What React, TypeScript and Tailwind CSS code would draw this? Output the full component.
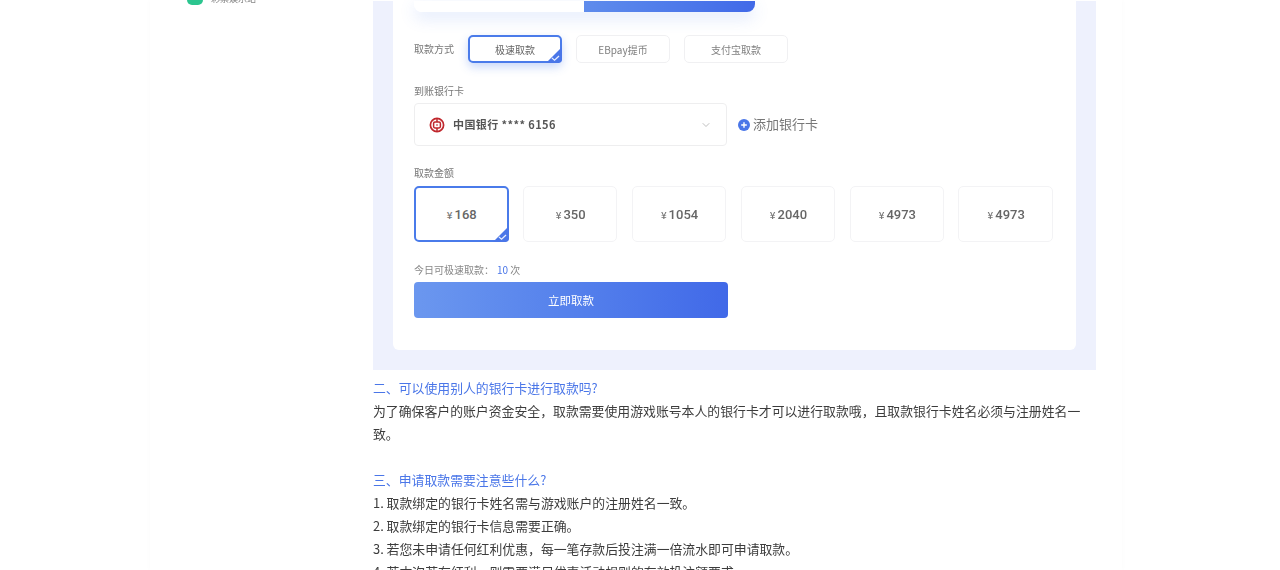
import { ChevronDown } from "lucide-react";

const font = { fontFamily: '"Noto Sans CJK SC", "Noto Sans", sans-serif' };

function Corner({ size = 16 }: { size?: number }) {
  return (
    <svg className="absolute -right-[2px] -bottom-[2px]" width={size} height={size} viewBox="0 0 15 15">
      <path d="M15 0V11.5A3.5 3.5 0 0 1 11.5 15H0Z" fill="#4a76e8" />
      <path d="M5.5 10.2L8 12.4L12.2 8.4" fill="none" stroke="#e8efff" strokeWidth="1.2" />
    </svg>
  );
}

function BankIcon() {
  return (
    <svg width="16" height="16" viewBox="0 0 16 16" className="shrink-0">
      <circle cx="8" cy="8" r="6.6" fill="none" stroke="#c0272d" strokeWidth="1.7" />
      <rect x="4.6" y="5" width="6.8" height="6" rx="1.4" fill="none" stroke="#c0272d" strokeWidth="1.5" />
      <path d="M8 1.5V5M8 11V14.5" stroke="#c0272d" strokeWidth="1.5" />
      <path d="M8 7V9" stroke="#c0272d" strokeWidth="1" />
    </svg>
  );
}

function MethodButton({ label, width, active }: { label: string; width: string; active?: boolean }) {
  return (
    <div
      className={
        active
          ? "relative flex h-[28px] w-[94px] items-center justify-center rounded-[5px] border-2 border-[#4a7bea] bg-white text-[10px] text-[#666] shadow-[0_4px_10px_rgba(74,123,234,0.3)]"
          : `flex h-[28px] ${width} items-center justify-center rounded-[5px] border border-[#f0f0f2] bg-white text-[10px] text-[#808080]`
      }
    >
      {label}
      {active && <Corner />}
    </div>
  );
}

function AmountCard({ value, active }: { value: string; active?: boolean }) {
  return (
    <div
      className={
        active
          ? "relative flex h-[56px] items-center justify-center rounded-[5px] border-2 border-[#4a7bea] bg-white pt-[1px] pl-[1px]"
          : "flex h-[56px] items-center justify-center rounded-[5px] border border-[#f3f3f5] bg-white pt-[1px] pl-[1px]"
      }
    >
      <span className="text-[10px] font-medium text-[#777]">¥</span>
      <span className="ml-[2px] text-[13px] font-medium text-[#666]" style={{ fontFamily: "Roboto, sans-serif" }}>
        {value}
      </span>
      {active && <Corner />}
    </div>
  );
}

export default function App() {
  return (
    <div className="h-[570px] overflow-hidden bg-white text-[12.87px] leading-[23px] text-[#3c3c3c]" style={font}>
      <div className="ml-[150px] flex h-[570px] w-[972px] shadow-[0_0_6px_rgba(0,0,0,0.025)]">
        <aside className="flex w-[223px] shrink-0 items-start gap-[8px] overflow-hidden pl-[37px]">
          <div className="h-[5px] w-[16px] shrink-0 rounded-b-full bg-[#2cc58f]" />
          <div className="-mt-[6px] text-[9px] leading-[10px] text-[#888] blur-[0.4px]">彩票娱乐站</div>
        </aside>

        <main className="w-[723px] shrink-0">
          <section className="mt-px bg-[#eef1fd] px-[20px] pb-[20px]">
            <div className="rounded-b-[6px] bg-white pb-[32px] pl-[21px]">
              <div className="blur-[0.35px]">
                <div className="flex h-[11px] w-[341px] overflow-hidden rounded-b-[8px] shadow-[0_6px_16px_rgba(74,123,234,0.18)]">
                  <div className="w-[170px] bg-white" />
                  <div className="flex-1 bg-gradient-to-r from-[#5f8cec] to-[#4169e8]" />
                </div>

                <div className="mt-[23px] flex items-center">
                  <span className="w-[54px] text-[10px] leading-[14px] text-[#777]">取款方式</span>
                  <div className="flex gap-[14px]">
                    <MethodButton label="极速取款" width="w-[94px]" active />
                    <MethodButton label="EBpay提币" width="w-[94px]" />
                    <MethodButton label="支付宝取款" width="w-[104px]" />
                  </div>
                </div>

                <div className="mt-[21px] text-[10px] leading-[14px] text-[#777]">到账银行卡</div>
                <div className="mt-[5px] flex items-center">
                  <div className="flex h-[43px] w-[313px] items-center rounded-[4px] border border-[#eeeeef] bg-white pr-[14px] pl-[14px]">
                    <BankIcon />
                    <span className="ml-[8px] flex-1 pb-[1px] text-[11px] font-bold tracking-[0.4px] text-[#555]">中国银行 **** 6156</span>
                    <ChevronDown size={12} strokeWidth={1.5} color="#aaaaaa" />
                  </div>
                  <span className="ml-[11px] flex h-[12px] w-[12px] items-center justify-center rounded-full bg-[#4a76e8]">
                    <svg width="8" height="8" viewBox="0 0 8 8">
                      <path d="M4 1.2V6.8M1.2 4H6.8" stroke="#fff" strokeWidth="1.4" />
                    </svg>
                  </span>
                  <span className="ml-[3px] pb-[2px] text-[13px] text-[#777]">添加银行卡</span>
                </div>

                <div className="mt-[20px] text-[10px] leading-[14px] text-[#777]">取款金额</div>
                <div className="mt-[6px] grid w-[639px] grid-cols-6 gap-[14.4px]">
                  <AmountCard value="168" active />
                  <AmountCard value="350" />
                  <AmountCard value="1054" />
                  <AmountCard value="2040" />
                  <AmountCard value="4973" />
                  <AmountCard value="4973" />
                </div>

                <div className="mt-[21px] text-[10px] leading-[14px] text-[#888]">
                  今日可极速取款：<span className="ml-[3px] text-[#4a76e8]">10</span> 次
                </div>
                <div className="mt-[5px] flex h-[36px] w-[314px] items-center justify-center rounded-[4px] bg-gradient-to-r from-[#6b97ef] to-[#4169e8] text-[11.5px] text-white">
                  立即取款
                </div>
              </div>
            </div>
          </section>

          <article className="mt-[6px] blur-[0.2px]">
            <p className="text-[#4a76e8]">二、可以使用别人的银行卡进行取款吗?</p>
            <p>为了确保客户的账户资金安全，取款需要使用游戏账号本人的银行卡才可以进行取款哦，且取款银行卡姓名必须与注册姓名一致。</p>
            <p className="mt-[23px] text-[#4a76e8]">三、申请取款需要注意些什么?</p>
            <p>1. 取款绑定的银行卡姓名需与游戏账户的注册姓名一致。</p>
            <p>2. 取款绑定的银行卡信息需要正确。</p>
            <p>3. 若您未申请任何红利优惠，每一笔存款后投注满一倍流水即可申请取款。</p>
            <p>4. 若本次若有红利，则需要满足优惠活动规则的有效投注额要求。</p>
          </article>
        </main>
      </div>
    </div>
  );
}
